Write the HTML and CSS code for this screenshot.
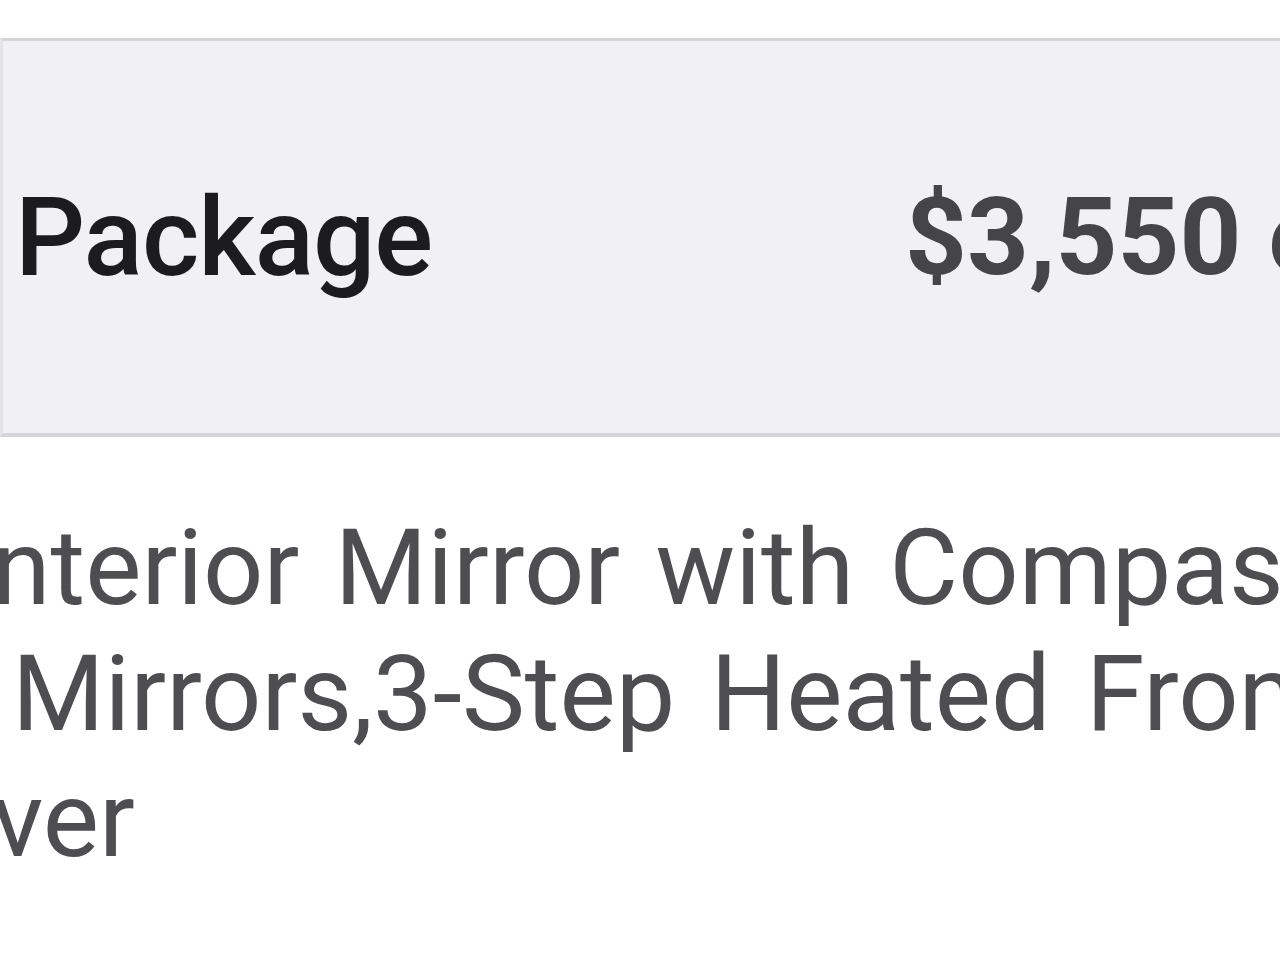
FILE: index.html
```html
<!DOCTYPE html>
<html lang="en">
<head>
  <meta charset="UTF-8">
  <meta name="viewport" content="width=device-width, initial-scale=1.0">
  <title>Package Options</title>
  <link rel="stylesheet" href="styles.css">
</head>
<body>
<div class="page">
  <!-- Package header row -->
  <div class="package-head">
    <div class="package-name">Package</div>
    <div class="package-price">$3,550 e</div>
  </div>

  <!-- Package contents -->
  <div class="package-desc">
    <div class="desc-line shift">nterior Mirror with Compass</div>
    <div class="desc-line indent">Mirrors,3-Step Heated Front</div>
    <div class="desc-line shift">ver</div>
  </div>
</div>
</body>
</html>
```

FILE: styles.css
```css
html, body {
  margin: 0;
  padding: 0;
  background: #fff;
  overflow: hidden;
}
.page {
  width: 1280px;
  height: 960px;
  padding-top: 38px;
  box-sizing: border-box;
  font-family: Roboto, "Liberation Sans", sans-serif;
  overflow: hidden;
}
.package-head {
  display: flex;
  align-items: center;
  height: 392px;
  background: #f1f0f5;
  border-top: 3px solid #d6d5da;
  border-bottom: 4px solid #d6d5da;
  border-left: 3px solid #e4e3e8;
  white-space: nowrap;
  overflow: hidden;
}
.package-name {
  flex: 0 0 902px;
  padding-left: 12px;
  box-sizing: border-box;
  font-size: 110px;
  font-weight: 500;
  letter-spacing: -1px;
  color: #1c1c1e;
}
.package-price {
  font-size: 108px;
  font-weight: 700;
  color: #454547;
}
.package-desc {
  margin-top: 68px;
  font-size: 106px;
  line-height: 126px;
  word-spacing: 9px;
  color: #4e4e50;
  white-space: nowrap;
}
.desc-line.shift {
  margin-left: -8px;
}
.desc-line.indent {
  padding-left: 12px;
}
```
